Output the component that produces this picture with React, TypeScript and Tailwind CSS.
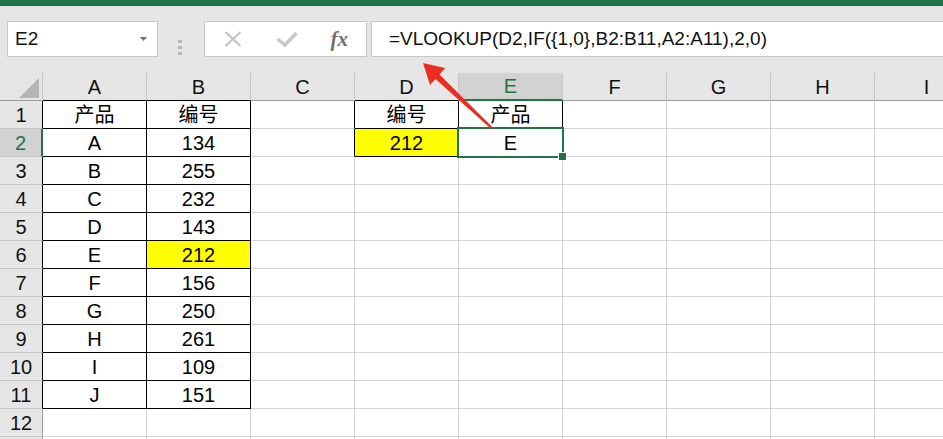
import React from 'react';

const COLS = ['A', 'B', 'C', 'D', 'E', 'F', 'G', 'H', 'I'];
const ROWS = Array.from({ length: 12 }, (_, i) => i + 1);

const letters = 'ABCDEFGHIJ';
const numbers = [134, 255, 232, 143, 212, 156, 250, 261, 109, 151];

const data: Record<string, string> = { A1: '产品', B1: '编号', D1: '编号', E1: '产品', D2: '212', E2: 'E' };
numbers.forEach((n, i) => {
  data['A' + (i + 2)] = letters[i];
  data['B' + (i + 2)] = String(n);
});

const yellow = new Set(['B6', 'D2']);

// cells with the black table border
const inTable = (r: number, c: number) =>
  (r >= 1 && r <= 11 && c >= 0 && c <= 1) || (r >= 1 && r <= 2 && c >= 3 && c <= 4);

const font = "font-['Liberation_Sans','Noto_Sans_CJK_SC',sans-serif]";

const Toolbar = () => (
  <div className={`h-[67px] bg-[#e6e6e6] flex items-start pt-[15px] ${font}`}>
    {/* Name box */}
    <div className="ml-[7px] w-[151px] h-[36px] shrink-0 bg-white border border-[#c6c6c6] flex items-center justify-between pl-[7px] pr-[10px]">
      <span className="text-[19px] text-[#111]">E2</span>
      <svg width="7" height="4" viewBox="0 0 7 4">
        <polygon points="0,0 7,0 3.5,4" fill="#707070" />
      </svg>
    </div>

    {/* grip dots */}
    <div className="ml-[20px] w-[5px] shrink-0 self-center flex flex-col gap-[3px]">
      <div className="h-[3px] w-[4px] bg-[#b8b8b8]" />
      <div className="h-[3px] w-[4px] bg-[#b8b8b8]" />
      <div className="h-[3px] w-[4px] bg-[#b8b8b8]" />
    </div>

    {/* cancel / enter / fx */}
    <div className="ml-[21px] w-[163px] h-[36px] shrink-0 bg-white border border-[#c6c6c6] flex items-center">
      <div className="w-[54px] flex justify-center pl-[2px]">
        <svg width="18" height="16" viewBox="0 0 18 16">
          <path d="M1.5 1 L16.5 15 M16.5 1 L1.5 15" stroke="#c2c2c2" strokeWidth="2" fill="none" />
        </svg>
      </div>
      <div className="w-[54px] flex justify-center pl-[2px]">
        <svg width="22" height="16" viewBox="0 0 22 16">
          <path d="M1.5 8 L9 14 L20.5 2" stroke="#c8c8c8" strokeWidth="3.5" fill="none" />
        </svg>
      </div>
      <div className="w-[54px] flex justify-center">
        <span className="font-['Liberation_Serif',serif] italic font-bold text-[21px] text-[#707070] leading-none">fx</span>
      </div>
    </div>

    {/* formula input */}
    <div className="ml-[4px] flex-1 h-[36px] bg-white border border-r-0 border-[#c6c6c6] flex items-center pl-[17px]">
      <span className="text-[19px] text-[#111] whitespace-nowrap">
        =VLOOKUP(D2,IF({'{'}1,0{'}'},B2:B11,A2:A11),2,0)
      </span>
    </div>
  </div>
);

const HeaderRow = () => (
  <div className="flex h-[28px]">
    <div className="w-[43px] shrink-0 bg-[#e6e6e6] border-r border-b border-[#c6c6c6] border-b-[#9b9b9b] flex items-end justify-end pr-[3px] pb-[2px]">
      <svg width="20" height="20" viewBox="0 0 20 20">
        <polygon points="20,0 20,20 0,20" fill="#b4b4b4" />
      </svg>
    </div>
    {COLS.map((c, i) => {
      const sel = c === 'E';
      const below = inTable(1, i);
      return (
        <div
          key={c}
          className={`w-[104px] shrink-0 flex items-center justify-center text-[20px] border-r border-r-[#c6c6c6] ${
            sel
              ? 'bg-[#d2d2d2] text-[#217346] border-b-2 border-b-[#217346]'
              : below
              ? 'bg-[#e6e6e6] text-[#111] border-b border-b-black'
              : 'bg-[#e6e6e6] text-[#111] border-b border-b-[#9b9b9b]'
          }`}
        >
          {c}
        </div>
      );
    })}
  </div>
);

const Grid = () => (
  <div className={`relative ${font}`}>
    <HeaderRow />
    {ROWS.map((r) => {
      const selRow = r === 2;
      return (
        <div key={r} className="flex h-[28px]">
          <div
            className={`w-[43px] shrink-0 flex items-center justify-center text-[20px] border-b border-b-[#c6c6c6] ${
              selRow
                ? 'bg-[#d2d2d2] text-[#217346] border-r-2 border-r-[#217346]'
                : inTable(r, 0)
                ? 'bg-[#e6e6e6] text-[#111] border-r border-r-black'
                : 'bg-[#e6e6e6] text-[#111] border-r border-r-[#9b9b9b]'
            }`}
          >
            {r}
          </div>
          {COLS.map((c, i) => {
            const key = c + r;
            const right = inTable(r, i) || inTable(r, i + 1);
            const bottom = inTable(r, i) || inTable(r + 1, i);
            return (
              <div
                key={key}
                className={`w-[104px] shrink-0 flex items-center justify-center text-[20px] text-black border-r border-b ${
                  right ? 'border-r-black' : 'border-r-[#d4d4d4]'
                } ${bottom ? 'border-b-black' : 'border-b-[#d4d4d4]'} ${
                  yellow.has(key) ? 'bg-[#ffff00]' : 'bg-white'
                }`}
              >
                {data[key] ?? ''}
              </div>
            );
          })}
        </div>
      );
    })}
    {/* top sliver of row 13 */}
    <div className="flex h-[28px]">
      <div className="w-[43px] shrink-0 bg-[#e6e6e6] border-r border-r-[#9b9b9b]" />
      {COLS.map((c) => (
        <div key={c} className="w-[104px] shrink-0 border-r border-r-[#d4d4d4] bg-white" />
      ))}
    </div>

    {/* active cell E2 */}
    <div className="absolute left-[457px] top-[54px] w-[107px] h-[31px] border-2 border-[#217346]" />
    <div className="absolute left-[559px] top-[80px] w-[7px] h-[7px] bg-[#217346] outline outline-1 outline-white" />
  </div>
);

export default function App() {
  return (
    <div className="relative w-[943px] h-[439px] overflow-hidden bg-white">
      <div className="h-[6px] bg-[#217346]" />
      <Toolbar />
      <Grid />

      {/* red annotation arrow */}
      <svg className="absolute left-0 top-0 pointer-events-none" width="943" height="439">
        <polygon
          points="423,63 445,68 439.5,74.5 492.8,127.6 491.2,129 435.5,78.9 430,85"
          fill="#ec2d23"
        />
      </svg>
    </div>
  );
}
